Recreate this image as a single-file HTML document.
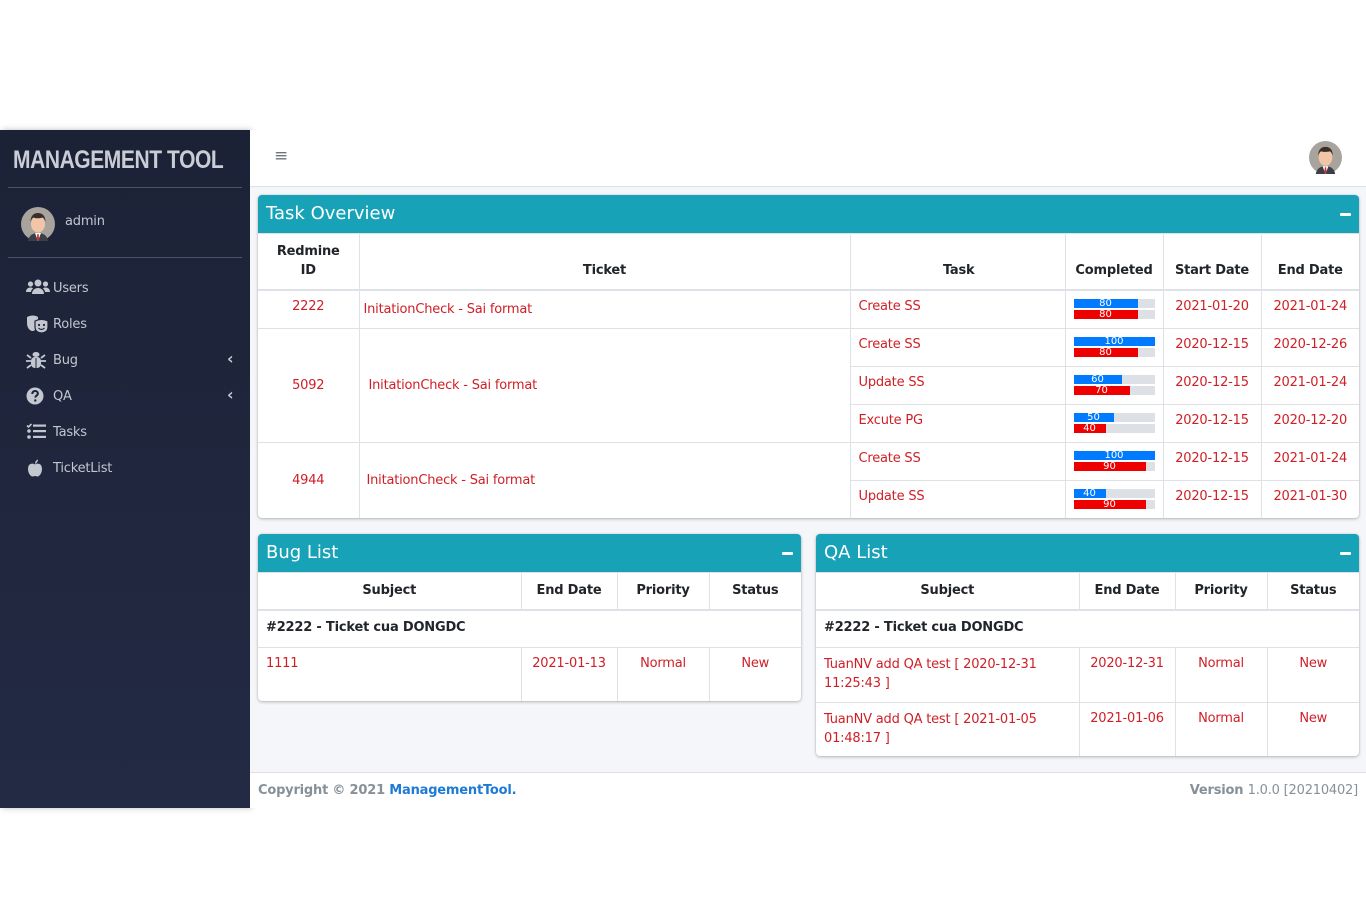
<!DOCTYPE html>
<html><head><meta charset="utf-8">
<style>
*{box-sizing:border-box;margin:0;padding:0}
body{width:1366px;height:921px;background:#fff;position:relative;font-family:"DejaVu Sans","Liberation Sans",sans-serif;font-size:12px;letter-spacing:-0.2px;color:#212529;overflow:hidden}
.sb{position:absolute;left:0;top:130px;width:250px;height:678px;background:linear-gradient(180deg,#1c2236,#232a44);box-shadow:2px 0 6px rgba(0,0,0,.25)}
.brand{position:absolute;left:8px;top:0;width:234px;height:58px;border-bottom:1px solid #4b5168;color:#c9cdd6;font-family:"Liberation Sans",sans-serif;font-weight:bold;font-size:25px;letter-spacing:-0.5px;padding:16px 0 0 5px;white-space:nowrap}
.brand span{display:inline-block;transform:scaleX(.84);transform-origin:left}
.user{position:absolute;left:8px;top:58px;width:234px;height:70px;border-bottom:1px solid #4b5168}
.user .nm{position:absolute;left:57px;top:26px;color:#c2c7d0;font-size:13px}
.nav{position:absolute;left:26px;color:#c2c7d0;font-size:13px}
.nav svg{position:absolute;left:0;top:-1px}
.nav span{position:absolute;left:27px;top:1px;white-space:nowrap}
.chev{position:absolute;left:227px;color:#c2c7d0;font-size:16px;font-weight:bold;line-height:14px}
.top{position:absolute;left:250px;top:130px;width:1116px;height:57px;background:#fff;border-bottom:1px solid #dee2e6}
.content{position:absolute;left:250px;top:187px;width:1116px;height:585px;background:#f4f6f9}
.foot{position:absolute;left:250px;top:772px;width:1116px;height:36px;background:#fff;border-top:1px solid #dee2e6;color:#869099;font-size:13px;font-weight:bold}
.card{position:absolute;background:#fff;box-shadow:0 0 1px rgba(0,0,0,.2),0 1px 3px rgba(0,0,0,.25);border-radius:4px;overflow:hidden}
.ch{height:38px;background:#17a2b8;color:#fff;font-size:18px;padding:8px 8px;position:relative;letter-spacing:0}
.ch:after{content:"";position:absolute;right:8px;top:18px;width:11px;height:3px;background:#fff;border-radius:1px}
table{border-collapse:collapse;table-layout:fixed;width:100%}
td,th{border:1px solid #dee2e6;font-size:13px;vertical-align:top;padding:8px 4px 0 4px}
th{text-align:center;vertical-align:bottom;padding-bottom:9px;font-weight:bold;border-bottom:2px solid #dee2e6;line-height:19px}
tr>*:first-child{border-left:none}tr>*:last-child{border-right:none}
.r{color:#cf1f26}
.c{text-align:center}
.bar{width:81px;height:9px;background:#dde0e4;margin:0 0 2px 4px;position:relative;font-size:10px;line-height:9px;color:#fff;text-align:center;letter-spacing:0}
.bar i{position:absolute;left:0;top:0;height:9px;display:block;font-style:normal;overflow:visible;white-space:nowrap}
</style></head><body>
<div class="sb">
 <div class="brand"><span>MANAGEMENT TOOL</span></div>
 <div class="user">
  <svg style="position:absolute;left:13px;top:19px" width="34" height="34" viewBox="0 0 34 34"><circle cx="17" cy="17" r="17" fill="#a9a39e"/><path d="M7 34c1-6 5-8 10-8s9 2 10 8z" fill="#3b4048"/><path d="M14 26l3 8 3-8z" fill="#fff"/><path d="M16.3 27h1.4l.5 6h-2.4z" fill="#d0322e"/><ellipse cx="17" cy="17" rx="7" ry="8.5" fill="#f1c6a6"/><path d="M9.5 15c0-6 3-9 7.5-9s7.5 3 7.5 9c-1-3-2-4-3-4.5-3 1-7 1-9 0-1 .5-2 1.5-3 4.5z" fill="#3a2e2a"/></svg>
  <div class="nm">admin</div>
 </div>
 <div class="nav" style="top:150px"><svg width="24" height="16" viewBox="0 0 24 16" fill="#c2c7d0"><circle cx="12" cy="4" r="3.5"/><circle cx="4.5" cy="5" r="2.6"/><circle cx="19.5" cy="5" r="2.6"/><path d="M6 15c0-4 3-6 6-6s6 2 6 6z"/><path d="M0 13c0-3 2-4.5 4.5-4.5 1 0 2 .3 2.6.8C5.8 10.5 5 12 5 13z"/><path d="M24 13c0-3-2-4.5-4.5-4.5-1 0-2 .3-2.6.8 1.3 1.2 2.1 2.7 2.1 3.7z"/></svg><span>Users</span></div>
 <div class="nav" style="top:186px"><svg width="24" height="18" viewBox="0 0 24 18" fill="#c2c7d0"><path d="M1 2c4-2 8-2 11 0v6c0 5-3 8-5.5 8S1 13 1 8z"/><path d="M9 6c4-2 9-2 13 0v6c0 4-3 6-6.5 6S9 16 9 12z" stroke="#1e2438" stroke-width="1.2"/><circle cx="13" cy="10" r="1.1" fill="#1e2438"/><circle cx="18" cy="10" r="1.1" fill="#1e2438"/><path d="M12.5 13q3 3 6 0" stroke="#1e2438" fill="none" stroke-width="1.2"/></svg><span>Roles</span></div>
 <div class="nav" style="top:222px"><svg width="20" height="18" viewBox="0 0 20 18" fill="#c2c7d0"><ellipse cx="10" cy="3.5" rx="3.5" ry="2.5"/><rect x="5" y="6" width="10" height="11" rx="4"/><path d="M1 4l4 3M19 4l-4 3M0 10h5M20 10h-5M1 17l4-3M19 17l-4-3" stroke="#c2c7d0" stroke-width="1.8"/><path d="M10 7v10" stroke="#1e2438" stroke-width="1"/></svg><span>Bug</span></div>
 <div class="chev" style="top:222px">&#8249;</div>
 <div class="nav" style="top:258px"><svg width="18" height="18" viewBox="0 0 18 18"><circle cx="9" cy="9" r="8.5" fill="#c2c7d0"/><path d="M6.3 7c0-2 1.3-3 2.8-3s2.8 1 2.8 2.6c0 2-2.6 2-2.6 4" stroke="#1e2438" stroke-width="2" fill="none"/><circle cx="9.3" cy="13.5" r="1.2" fill="#1e2438"/></svg><span>QA</span></div>
 <div class="chev" style="top:258px">&#8249;</div>
 <div class="nav" style="top:294px"><svg width="20" height="16" viewBox="0 0 20 16" fill="#c2c7d0"><path d="M1 2.5l1.5 1.5 3-3" stroke="#c2c7d0" stroke-width="1.6" fill="none"/><circle cx="3" cy="8" r="1.8"/><circle cx="3" cy="14" r="1.8"/><rect x="7" y="1.5" width="13" height="2.2"/><rect x="7" y="7" width="13" height="2.2"/><rect x="7" y="12.8" width="13" height="2.2"/></svg><span>Tasks</span></div>
 <div class="nav" style="top:330px"><svg width="18" height="18" viewBox="0 0 18 18" fill="#c2c7d0"><path d="M9 5.5c-2-1.5-7-1.5-7 4.5 0 4 2.5 7.5 4.5 7.5 1 0 1.5-.5 2.5-.5s1.5.5 2.5.5c2 0 4.5-3.5 4.5-7.5 0-6-5-6-7-4.5z"/><path d="M9 5c0-2 1-4 3-4.5-.2 2-1 3.5-3 4.5z"/></svg><span>TicketList</span></div>
</div>

<div class="top">
 <div style="position:absolute;left:24px;top:16px;color:#6c757d;font-size:17px">&#8801;</div>
 <svg style="position:absolute;left:1059px;top:11px" width="33" height="33" viewBox="0 0 34 34"><circle cx="17" cy="17" r="17" fill="#a9a39e"/><path d="M7 34c1-6 5-8 10-8s9 2 10 8z" fill="#3b4048"/><path d="M14 26l3 8 3-8z" fill="#fff"/><path d="M16.3 27h1.4l.5 6h-2.4z" fill="#d0322e"/><ellipse cx="17" cy="17" rx="7" ry="8.5" fill="#f1c6a6"/><path d="M9.5 15c0-6 3-9 7.5-9s7.5 3 7.5 9c-1-3-2-4-3-4.5-3 1-7 1-9 0-1 .5-2 1.5-3 4.5z" fill="#3a2e2a"/></svg>
</div>
<div class="content"></div>

<div class="card" style="left:258px;top:195px;width:1101px;height:323px">
 <div class="ch">Task Overview</div>
 <table>
  <colgroup><col style="width:101px"><col style="width:491px"><col style="width:215px"><col style="width:98px"><col style="width:98px"><col style="width:98px"></colgroup>
  <tr style="height:53px"><th>Redmine<br>ID</th><th>Ticket</th><th style="text-align:right;padding-right:90px">Task</th><th>Completed</th><th>Start Date</th><th>End Date</th></tr>
  <tr style="height:38px"><td class="r c">2222</td><td class="r" style="padding-top:11px">InitationCheck - Sai format</td><td class="r" style="padding-left:8px">Create SS</td><td style="padding-top:8px"><div class="bar"><i style="width:64px;background:#007bff">80</i></div><div class="bar"><i style="width:64px;background:#e00">80</i></div></td><td class="r c">2021-01-20</td><td class="r c">2021-01-24</td></tr>
  <tr style="height:38px"><td class="r c" rowspan="3" style="vertical-align:middle;padding-top:0">5092</td><td class="r" rowspan="3" style="vertical-align:middle;padding-left:9px;padding-top:0">InitationCheck - Sai format</td><td class="r" style="padding-left:8px">Create SS</td><td style="padding-top:8px"><div class="bar"><i style="width:81px;background:#007bff">100</i></div><div class="bar"><i style="width:64px;background:#e00">80</i></div></td><td class="r c">2020-12-15</td><td class="r c">2020-12-26</td></tr>
  <tr style="height:38px"><td class="r" style="padding-left:8px">Update SS</td><td style="padding-top:8px"><div class="bar"><i style="width:48px;background:#007bff">60</i></div><div class="bar"><i style="width:56px;background:#e00">70</i></div></td><td class="r c">2020-12-15</td><td class="r c">2021-01-24</td></tr>
  <tr style="height:38px"><td class="r" style="padding-left:8px">Excute PG</td><td style="padding-top:8px"><div class="bar"><i style="width:40px;background:#007bff">50</i></div><div class="bar"><i style="width:32px;background:#e00">40</i></div></td><td class="r c">2020-12-15</td><td class="r c">2020-12-20</td></tr>
  <tr style="height:38px"><td class="r c" rowspan="2" style="vertical-align:middle;padding-top:0">4944</td><td class="r" rowspan="2" style="vertical-align:middle;padding-left:7px;padding-top:0">InitationCheck - Sai format</td><td class="r" style="padding-left:8px">Create SS</td><td style="padding-top:8px"><div class="bar"><i style="width:81px;background:#007bff">100</i></div><div class="bar"><i style="width:72px;background:#e00">90</i></div></td><td class="r c">2020-12-15</td><td class="r c">2021-01-24</td></tr>
  <tr style="height:38px"><td class="r" style="padding-left:8px">Update SS</td><td style="padding-top:8px"><div class="bar"><i style="width:32px;background:#007bff">40</i></div><div class="bar"><i style="width:72px;background:#e00">90</i></div></td><td class="r c">2020-12-15</td><td class="r c">2021-01-30</td></tr>
 </table>
</div>

<div class="card" style="left:258px;top:534px;width:543px;height:167px">
 <div class="ch">Bug List</div>
 <table>
  <colgroup><col style="width:263px"><col style="width:96px"><col style="width:92px"><col style="width:92px"></colgroup>
  <tr style="height:34px"><th>Subject</th><th>End Date</th><th>Priority</th><th>Status</th></tr>
  <tr style="height:37px"><td colspan="4" style="font-weight:bold;padding-left:8px;padding-top:9px">#2222 - Ticket cua DONGDC</td></tr>
  <tr style="height:56px"><td class="r" style="padding-left:8px">1111</td><td class="r c">2021-01-13</td><td class="r c">Normal</td><td class="r c">New</td></tr>
 </table>
</div>

<div class="card" style="left:816px;top:534px;width:543px;height:222px">
 <div class="ch">QA List</div>
 <table>
  <colgroup><col style="width:263px"><col style="width:96px"><col style="width:92px"><col style="width:92px"></colgroup>
  <tr style="height:34px"><th>Subject</th><th>End Date</th><th>Priority</th><th>Status</th></tr>
  <tr style="height:37px"><td colspan="4" style="font-weight:bold;padding-left:8px;padding-top:9px">#2222 - Ticket cua DONGDC</td></tr>
  <tr style="height:55px"><td class="r" style="padding-left:8px;line-height:19px;padding-top:7px">TuanNV add QA test [ 2020-12-31 11:25:43 ]</td><td class="r c">2020-12-31</td><td class="r c">Normal</td><td class="r c">New</td></tr>
  <tr style="height:55px"><td class="r" style="padding-left:8px;line-height:19px;padding-top:7px">TuanNV add QA test [ 2021-01-05 01:48:17 ]</td><td class="r c">2021-01-06</td><td class="r c">Normal</td><td class="r c">New</td></tr>
 </table>
</div>

<div class="foot">
 <div style="position:absolute;left:8px;top:10px">Copyright © 2021 <span style="color:#1e7ad6">ManagementTool.</span></div>
 <div style="position:absolute;right:8px;top:10px">Version <span style="font-weight:normal">1.0.0 [20210402]</span></div>
</div>
</body></html>
